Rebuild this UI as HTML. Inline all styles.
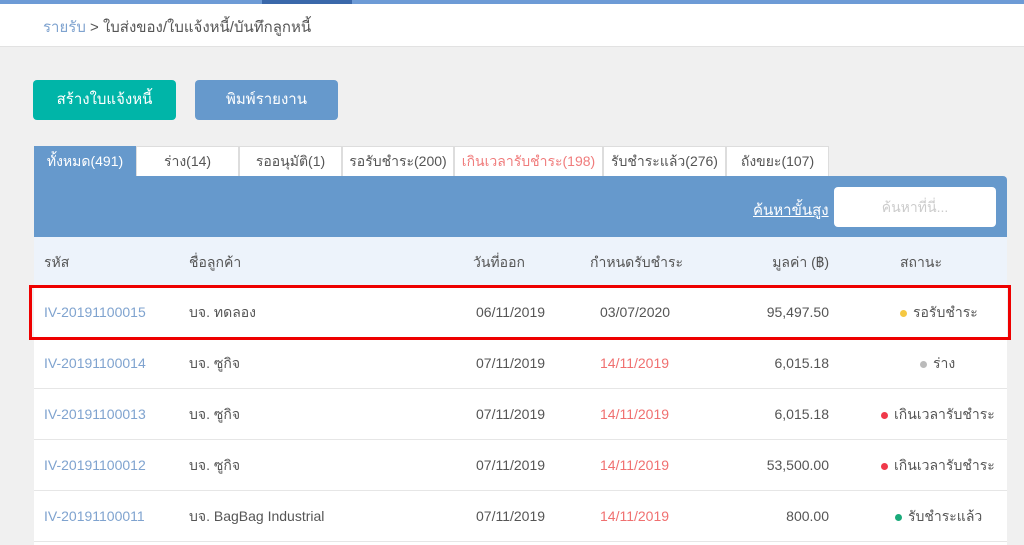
<!DOCTYPE html>
<html><head><meta charset="utf-8"><style>
*{margin:0;padding:0;box-sizing:border-box}
body{width:1024px;height:545px;overflow:hidden;background:#f0f0f0;font-family:"Liberation Sans",sans-serif;color:#555;position:relative;font-size:14px}
.a{position:absolute;white-space:nowrap}
.topbar{left:0;top:0;width:1024px;height:4px;background:#6d9bd6}
.topdark{left:262px;top:0;width:90px;height:4px;background:#3a68aa}
.header{left:0;top:4px;width:1024px;height:43px;background:#fff;border-bottom:1px solid #e2e2e2}
.btn{top:80px;height:40px;border-radius:4px;color:#fff;font-size:15px;text-align:center;line-height:40px}
.tab{top:146px;height:30px;background:#fff;border:1px solid #ddd;border-bottom:none;text-align:center;line-height:28px;font-size:14px;color:#555}
.bar{left:34px;top:176px;width:973px;height:61px;background:#6699cc;border-radius:0 4px 0 0}
.thead{left:34px;top:237px;width:973px;height:50px;background:#edf3fb;font-size:14px;color:#555}
.rows{left:34px;top:287px;width:973px;height:258px;background:#fff}
.row{position:absolute;left:0;width:973px;height:51px;border-bottom:1px solid #e6e6e6}
.c{position:absolute;top:0;line-height:50px;white-space:nowrap;font-size:14px}
.dot{display:inline-block;width:7px;height:7px;border-radius:50%;margin-right:6px;vertical-align:middle}
</style></head><body>
<div class="a topbar"></div><div class="a topdark"></div>
<div class="a header"></div>
<div class="a" style="left:43px;top:15px;font-size:15px"><span style="color:#7fa3cf">รายรับ</span> &gt; ใบส่งของ/ใบแจ้งหนี้/บันทึกลูกหนี้</div>
<div class="a btn" style="left:33px;width:143px;background:#00b5a8">สร้างใบแจ้งหนี้</div>
<div class="a btn" style="left:195px;width:143px;background:#6699cc">พิมพ์รายงาน</div>
<div class="a tab" style="left:34px;width:102px;background:#6699cc;color:#fff;border-color:#6699cc">ทั้งหมด(491)</div>
<div class="a tab" style="left:136px;width:103px">ร่าง(14)</div>
<div class="a tab" style="left:239px;width:103px">รออนุมัติ(1)</div>
<div class="a tab" style="left:342px;width:112px">รอรับชำระ(200)</div>
<div class="a tab" style="left:454px;width:149px;color:#f07c7c">เกินเวลารับชำระ(198)</div>
<div class="a tab" style="left:603px;width:123px">รับชำระแล้ว(276)</div>
<div class="a tab" style="left:726px;width:103px">ถังขยะ(107)</div>
<div class="a bar"></div>
<div class="a" style="left:753px;top:198px;color:#fff;text-decoration:underline;font-size:15px">ค้นหาขั้นสูง</div>
<div class="a" style="left:834px;top:187px;width:162px;height:40px;background:#fff;border-radius:4px;color:#ccc;text-align:center;line-height:40px">ค้นหาที่นี่...</div>
<div class="a thead">
<div class="c" style="left:10px">รหัส</div>
<div class="c" style="left:155px">ชื่อลูกค้า</div>
<div class="c" style="left:439px">วันที่ออก</div>
<div class="c" style="left:556px">กำหนดรับชำระ</div>
<div class="c" style="right:178px">มูลค่า (฿)</div>
<div class="c" style="left:866px">สถานะ</div>
</div>
<div class="a rows">
<div class="row" style="top:0"><div class="c" style="left:10px;color:#7fa3cf">IV-20191100015</div><div class="c" style="left:155px">บจ. ทดลอง</div><div class="c" style="left:442px">06/11/2019</div><div class="c" style="left:566px">03/07/2020</div><div class="c" style="right:178px">95,497.50</div><div class="c" style="left:866px"><span class="dot" style="background:#f5c842"></span>รอรับชำระ</div></div>
<div class="row" style="top:51px"><div class="c" style="left:10px;color:#7fa3cf">IV-20191100014</div><div class="c" style="left:155px">บจ. ซูกิจ</div><div class="c" style="left:442px">07/11/2019</div><div class="c" style="left:566px;color:#f07070">14/11/2019</div><div class="c" style="right:178px">6,015.18</div><div class="c" style="left:886px"><span class="dot" style="background:#bbb"></span>ร่าง</div></div>
<div class="row" style="top:102px"><div class="c" style="left:10px;color:#7fa3cf">IV-20191100013</div><div class="c" style="left:155px">บจ. ซูกิจ</div><div class="c" style="left:442px">07/11/2019</div><div class="c" style="left:566px;color:#f07070">14/11/2019</div><div class="c" style="right:178px">6,015.18</div><div class="c" style="left:847px"><span class="dot" style="background:#f0394a"></span>เกินเวลารับชำระ</div></div>
<div class="row" style="top:153px"><div class="c" style="left:10px;color:#7fa3cf">IV-20191100012</div><div class="c" style="left:155px">บจ. ซูกิจ</div><div class="c" style="left:442px">07/11/2019</div><div class="c" style="left:566px;color:#f07070">14/11/2019</div><div class="c" style="right:178px">53,500.00</div><div class="c" style="left:847px"><span class="dot" style="background:#f0394a"></span>เกินเวลารับชำระ</div></div>
<div class="row" style="top:204px"><div class="c" style="left:10px;color:#7fa3cf">IV-20191100011</div><div class="c" style="left:155px">บจ. BagBag Industrial</div><div class="c" style="left:442px">07/11/2019</div><div class="c" style="left:566px;color:#f07070">14/11/2019</div><div class="c" style="right:178px">800.00</div><div class="c" style="left:861px"><span class="dot" style="background:#1aaa7a"></span>รับชำระแล้ว</div></div>
</div>
<div class="a" style="left:29px;top:285px;width:982px;height:55px;border:3px solid #ee0000"></div>
</body></html>
